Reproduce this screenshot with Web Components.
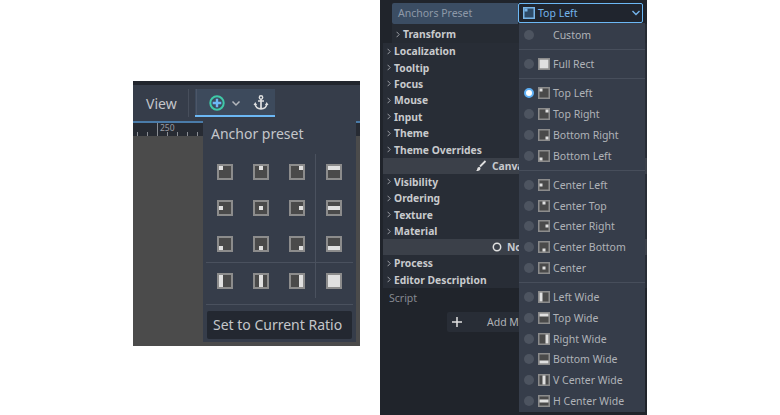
<!DOCTYPE html>
<html>
<head>
<meta charset="utf-8">
<style>
  html, body { margin: 0; background: #fff; }
  body { width: 780px; height: 415px; overflow: hidden; font-family: "Noto Sans", sans-serif; }
  .stage { display: flex; align-items: flex-start; padding-left: 133px; gap: 20px; }
</style>
</head>
<body>
<div class="stage">
  <anchor-toolbar></anchor-toolbar>
  <inspector-panel></inspector-panel>
</div>

<script>
// light part of each anchor icon: x,y,w,h inside a 16px box
const shapes = {
  'top-left': [2, 2, 4, 4], 'center-top': [6, 2, 4, 4], 'top-right': [10, 2, 4, 4],
  'center-left': [2, 6, 4, 4], 'center': [6, 6, 4, 4], 'center-right': [10, 6, 4, 4],
  'bottom-left': [2, 10, 4, 4], 'center-bottom': [6, 10, 4, 4], 'bottom-right': [10, 10, 4, 4],
  'left-wide': [2, 2, 4, 12], 'v-center': [6, 2, 4, 12], 'right-wide': [10, 2, 4, 12],
  'top-wide': [2, 2, 12, 4], 'h-center': [2, 6, 12, 4], 'bottom-wide': [2, 10, 12, 4],
  'full': [2, 2, 12, 12]
};

class AnchorIcon extends HTMLElement {
  connectedCallback() {
    const [x, y, w, h] = shapes[this.getAttribute('shape')];
    const size = this.getAttribute('size') || 16;
    const crisp = size == 16 ? 'shape-rendering="crispEdges"' : '';
    this.attachShadow({ mode: 'open' }).innerHTML = `
      <style>:host { display: block; width: ${size}px; height: ${size}px; flex: none; } svg { display: block; }</style>
      <svg width="${size}" height="${size}" viewBox="0 0 16 16" ${crisp}>
        <rect width="16" height="16" style="fill: var(--edge, #8c8c8c)"/>
        <rect x="2" y="2" width="12" height="12" style="fill: var(--inner, #4a4a4a)"/>
        <rect x="${x}" y="${y}" width="${w}" height="${h}" style="fill: var(--light, #e0e0e0)"/>
      </svg>`;
  }
}
customElements.define('anchor-icon', AnchorIcon);

const toolbarTemplate = document.createElement('template');
toolbarTemplate.innerHTML = `
  <style>
    :host {
      display: block; width: 227px; height: 265px; margin-top: 81px;
      background: #4b4b4b; position: relative; color: #c4c6ca; overflow: hidden;
    }
    .top { height: 4px; background: #22262e; }
    .bar { height: 36px; background: #363d4a; display: flex; align-items: center; }
    .view { font-size: 14px; margin-left: 13px; width: 42px; }
    .sep { width: 1px; height: 28px; background: #474e5b; }
    .tool {
      margin-left: 6px; width: 80px; height: 28px; padding-top: 2px; box-sizing: border-box;
      background: #3d4a5c; border-bottom: 2px solid #6cb8f5;
      display: flex; align-items: center; position: relative;
    }
    .tool::before { content: ""; position: absolute; left: 1px; top: 0; bottom: 0; width: 1px; background: #4c5668; }
    .tool svg { display: block; flex: none; }
    .ruler {
      height: 15px; background: #272b33; border-top: 2px solid #4a7ba8; box-sizing: border-box;
      font-size: 8.5px; color: #9a9da3; padding-left: 27px; line-height: 10px; position: relative;
    }
    .ruler svg { position: absolute; left: 0; top: 0; }
    .popup {
      position: absolute; left: 70px; top: 40px; width: 153px; height: 221px;
      background: #363d4a; padding: 0 3px; box-sizing: border-box;
    }
    .title { font-size: 14px; height: 26px; line-height: 26px; padding: 0 5px; margin-bottom: 7px; }
    .grid {
      display: grid; grid-template-columns: 36px 36px 36px 38px; grid-template-rows: 36px 36px 36px 38px;
      padding-left: 1px; position: relative; width: 147px; box-sizing: border-box;
    }
    .grid span { display: flex; align-items: center; justify-content: center; }
    .vline { position: absolute; left: 109px; top: 0; width: 1px; height: 144px; background: #4a515e; }
    .hline { position: absolute; left: 0; top: 108px; width: 147px; height: 1px; background: #4a515e; }
    .rule { height: 1px; background: #4a515e; width: 147px; margin-top: 4px; }
    button {
      display: block; font: inherit; font-size: 14px; color: #c4c6ca; background: #232831;
      border: 0; border-radius: 2px; width: 145px; height: 28px; margin: 6px 0 0 1px; padding: 0 6px 2px;
      text-align: left; white-space: nowrap;
    }
  </style>
  <div class="top"></div>
  <div class="bar">
    <div class="view">View</div>
    <div class="sep"></div>
    <div class="tool">
      <svg width="20" height="20" viewBox="0 0 20 20" style="margin-left:12px">
        <circle cx="10" cy="10" r="6.700" fill="#3d4a5c" stroke="#3fc9a8" stroke-width="2"/>
        <path d="M10 5.700v8.600M5.700 10h8.600" stroke="#6cb8f5" stroke-width="2.400"/>
      </svg>
      <svg width="12" height="12" viewBox="0 0 12 12" style="margin-left:3px">
        <path d="M2.500 4.500 6 8l3.500-3.500" fill="none" stroke="#b5b8bd" stroke-width="1.500"/>
      </svg>
      <svg width="18" height="18" viewBox="0 0 18 18" style="margin-left:10px">
        <circle cx="9" cy="3.400" r="1.700" fill="none" stroke="#e0e0e0" stroke-width="1.400"/>
        <path d="M6 7h6M9 5v10M3.300 10c0 3 2.500 4.800 5.700 4.800s5.700-1.800 5.700-4.800" fill="none" stroke="#e0e0e0" stroke-width="1.700"/>
        <path d="M1.500 11 3.300 8 5 11zM13 11l1.700-3 1.800 3z" fill="#e0e0e0"/>
      </svg>
    </div>
  </div>
  <div class="ruler">250
    <svg width="227" height="13" viewBox="0 0 227 13" stroke="#8a8d93">
      <path d="M24.500 0v13M4.500 9v4M14.500 9v4M34.500 9v4M44.500 9v4M54.500 9v4M64.500 9v4"/>
    </svg>
  </div>
  <div class="popup">
    <div class="title">Anchor preset</div>
    <div class="grid">
      <span><anchor-icon shape="top-left"></anchor-icon></span>
      <span><anchor-icon shape="center-top"></anchor-icon></span>
      <span><anchor-icon shape="top-right"></anchor-icon></span>
      <span><anchor-icon shape="top-wide"></anchor-icon></span>
      <span><anchor-icon shape="center-left"></anchor-icon></span>
      <span><anchor-icon shape="center"></anchor-icon></span>
      <span><anchor-icon shape="center-right"></anchor-icon></span>
      <span><anchor-icon shape="h-center"></anchor-icon></span>
      <span><anchor-icon shape="bottom-left"></anchor-icon></span>
      <span><anchor-icon shape="center-bottom"></anchor-icon></span>
      <span><anchor-icon shape="bottom-right"></anchor-icon></span>
      <span><anchor-icon shape="bottom-wide"></anchor-icon></span>
      <span><anchor-icon shape="left-wide"></anchor-icon></span>
      <span><anchor-icon shape="v-center"></anchor-icon></span>
      <span><anchor-icon shape="right-wide"></anchor-icon></span>
      <span><anchor-icon shape="full"></anchor-icon></span>
      <i class="vline"></i><i class="hline"></i>
    </div>
    <div class="rule"></div>
    <button>Set to Current Ratio</button>
  </div>
`;
class AnchorToolbar extends HTMLElement {
  constructor() {
    super();
    this.attachShadow({ mode: 'open' });
    this.shadowRoot.appendChild(toolbarTemplate.content.cloneNode(true));
  }
}
customElements.define('anchor-toolbar', AnchorToolbar);

const sectionTemplate = document.createElement('template');
sectionTemplate.innerHTML = `
  <style>
    :host {
      display: flex; align-items: center; height: 16.400px; padding-left: 4px;
      font-size: 10.300px; font-weight: 700; color: #c8cacd;
    }
    svg { margin-right: 3px; flex: none; }
  </style>
  <svg width="4" height="7" viewBox="0 0 4 7"><path d="M.6 .8 3.200 3.500 .6 6.200" fill="none" stroke="#9a9da3" stroke-width="1"/></svg>
  <slot></slot>
`;
class InspectorSection extends HTMLElement {
  constructor() {
    super();
    this.attachShadow({ mode: 'open' });
    this.shadowRoot.appendChild(sectionTemplate.content.cloneNode(true));
  }
}
customElements.define('inspector-section', InspectorSection);

const itemTemplate = document.createElement('template');
itemTemplate.innerHTML = `
  <style>
    :host {
      display: flex; align-items: center; height: 20.800px; padding-left: 5px;
      font-size: 10.500px; color: #b0b3b8; white-space: nowrap;
    }
    .dot { width: 10px; height: 10px; border-radius: 50%; background: #4d5460; flex: none; margin-right: 4px; box-sizing: border-box; }
    :host([on]) .dot { background: #fff; border: 2px solid #5fb0f5; }
    .ico { width: 12px; height: 12px; flex: none; margin-right: 3px; }
  </style>
  <span class="dot"></span><span class="ico" id="ico"></span><slot></slot>
`;
class PresetItem extends HTMLElement {
  constructor() {
    super();
    this.attachShadow({ mode: 'open' });
    this.shadowRoot.appendChild(itemTemplate.content.cloneNode(true));
  }
  connectedCallback() {
    const shape = this.getAttribute('shape');
    if (shape) this.shadowRoot.getElementById('ico').innerHTML = `<anchor-icon shape="${shape}" size="12"></anchor-icon>`;
  }
}
customElements.define('preset-item', PresetItem);

const panelTemplate = document.createElement('template');
panelTemplate.innerHTML = `
  <style>
    :host {
      display: block; width: 267px; height: 415px; background: #20242b; position: relative;
      overflow: hidden; color: #b0b3b8; font-size: 10.500px;
    }
    .row { margin: 3px 0 0 12px; background: #3b4d63; border-radius: 2px 0 0 2px; width: 126px;
      padding-left: 6px; height: 21px; color: #8e99a8; box-sizing: border-box; line-height: 20px; }
    .transform { background: #262b33; margin-left: 12px; height: 19px; padding-top: 2.200px; box-sizing: border-box; }
    .sections { background: #282d36; margin-left: 3px; }
    .group {
      height: 16px; background: #3b4049; margin-left: 3px; color: #c8cacd; font-weight: 700; font-size: 10.300px;
      display: flex; align-items: center; padding-left: 92px; box-sizing: border-box; white-space: nowrap;
    }
    .group svg { margin-right: 5px; flex: none; }
    .script { margin: 1px 0 0 9px; height: 18px; line-height: 18px; color: #868a92; }
    .add {
      margin: 5.200px 0 0 67px; width: 110px; height: 20px; background: #282d36; border-radius: 2px;
      display: flex; align-items: center; padding-left: 4px; box-sizing: border-box; color: #b0b3b8; white-space: nowrap;
    }
    .add svg { flex: none; }
    .add b { font-weight: 400; margin-left: 24px; }
    .popup {
      position: absolute; left: 139px; top: 23px; width: 126px; height: 389px;
      background: #363d4a; padding-top: 2.100px; box-sizing: border-box;
    }
    .select {
      position: absolute; left: 138px; top: 3px; width: 125px; height: 20px; box-sizing: border-box;
      border: 1px solid #6cb8f5; border-radius: 2px; background: #20252e; color: #74b4ec;
      display: flex; align-items: center; padding-left: 4px; font-size: 10.500px;
    }
    .select anchor-icon { margin-right: 3px; --edge: #78b4e6; --inner: #2e4a66; --light: #78b4e6; }
    .select svg { margin-left: auto; margin-right: 1px; }
    hr { border: 0; height: 1px; background: #474e5b; margin: 3.600px 0; }
  </style>
  <div class="row">Anchors Preset</div>
  <div class="transform"><inspector-section>Transform</inspector-section></div>
  <div class="sections">
    <inspector-section>Localization</inspector-section>
    <inspector-section>Tooltip</inspector-section>
    <inspector-section>Focus</inspector-section>
    <inspector-section>Mouse</inspector-section>
    <inspector-section>Input</inspector-section>
    <inspector-section>Theme</inspector-section>
    <inspector-section>Theme Overrides</inspector-section>
  </div>
  <div class="group">
    <svg width="12" height="12" viewBox="0 0 12 12"><path d="M10.500 1 5 6.500" stroke="#e0e0e0" stroke-width="1.800"/><path d="M1 11c2.500 0 4.500-.5 4.500-2.500S3 6.500 2.500 8 2 10.500 1 11z" fill="#e0e0e0"/></svg>
    Canvas Item
  </div>
  <div class="sections">
    <inspector-section>Visibility</inspector-section>
    <inspector-section>Ordering</inspector-section>
    <inspector-section>Texture</inspector-section>
    <inspector-section>Material</inspector-section>
  </div>
  <div class="group" style="padding-left:109px">
    <svg width="10" height="10" viewBox="0 0 10 10"><circle cx="5" cy="5" r="3.700" fill="none" stroke="#e0e0e0" stroke-width="1.500"/></svg>
    Node
  </div>
  <div class="sections">
    <inspector-section>Process</inspector-section>
    <inspector-section>Editor Description</inspector-section>
  </div>
  <div class="script">Script</div>
  <div class="add">
    <svg width="12" height="12" viewBox="0 0 12 12"><path d="M6 1v10M1 6h10" stroke="#e0e0e0" stroke-width="1.500"/></svg>
    <b>Add Metadata</b>
  </div>
  <div class="popup">
    <preset-item>Custom</preset-item>
    <hr>
    <preset-item shape="full">Full Rect</preset-item>
    <hr>
    <preset-item shape="top-left" on>Top Left</preset-item>
    <preset-item shape="top-right">Top Right</preset-item>
    <preset-item shape="bottom-right">Bottom Right</preset-item>
    <preset-item shape="bottom-left">Bottom Left</preset-item>
    <hr>
    <preset-item shape="center-left">Center Left</preset-item>
    <preset-item shape="center-top">Center Top</preset-item>
    <preset-item shape="center-right">Center Right</preset-item>
    <preset-item shape="center-bottom">Center Bottom</preset-item>
    <preset-item shape="center">Center</preset-item>
    <hr>
    <preset-item shape="left-wide">Left Wide</preset-item>
    <preset-item shape="top-wide">Top Wide</preset-item>
    <preset-item shape="right-wide">Right Wide</preset-item>
    <preset-item shape="bottom-wide">Bottom Wide</preset-item>
    <preset-item shape="v-center">V Center Wide</preset-item>
    <preset-item shape="h-center">H Center Wide</preset-item>
  </div>
  <div class="select">
    <anchor-icon shape="top-left" size="12"></anchor-icon>Top Left
    <svg width="10" height="10" viewBox="0 0 10 10"><path d="M1.500 3 5 6.500 8.500 3" fill="none" stroke="#74b4ec" stroke-width="1.400"/></svg>
  </div>
`;
class InspectorPanel extends HTMLElement {
  constructor() {
    super();
    this.attachShadow({ mode: 'open' });
    this.shadowRoot.appendChild(panelTemplate.content.cloneNode(true));
  }
}
customElements.define('inspector-panel', InspectorPanel);
</script>
</body>
</html>
